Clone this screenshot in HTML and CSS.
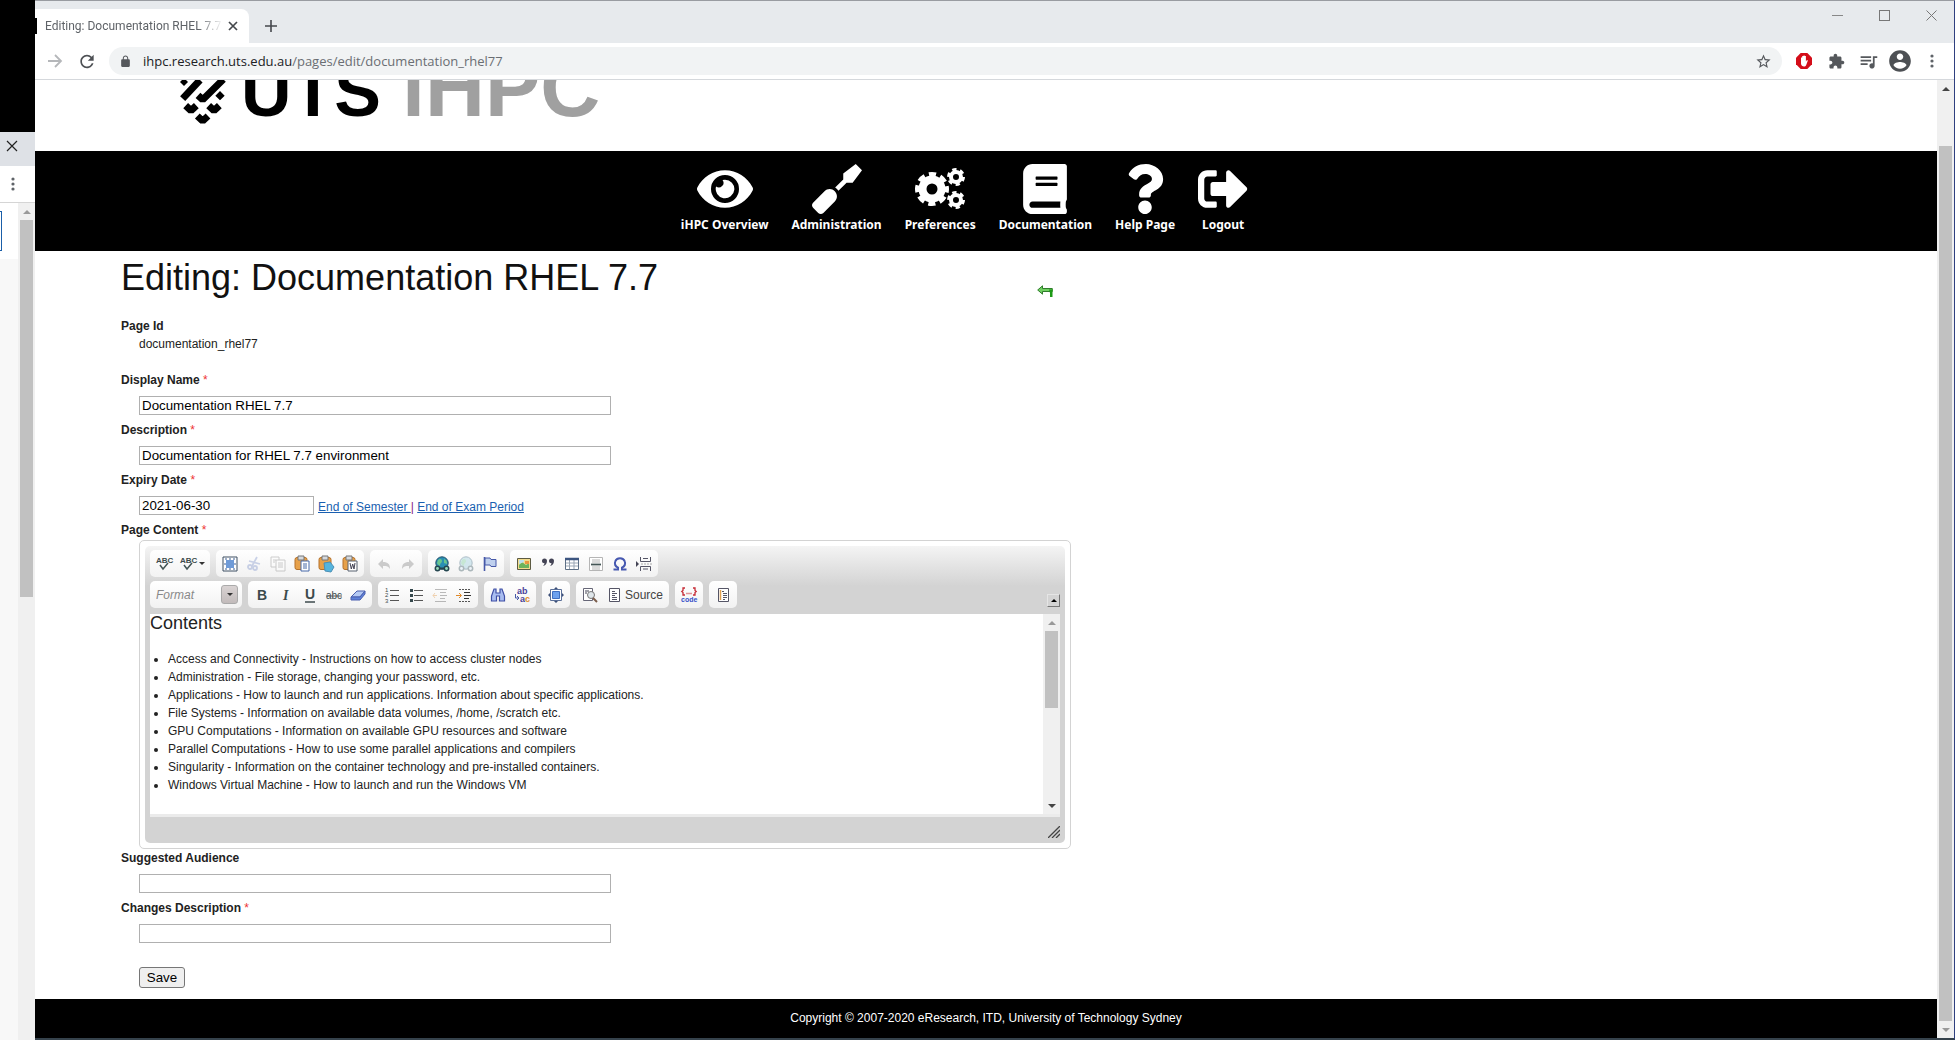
FILE: index.html
```html
<!DOCTYPE html>
<html lang="en">
<head>
<meta charset="utf-8">
<title>Editing: Documentation RHEL 7.7</title>
<link rel="stylesheet" href="styles.css">
</head>
<body>
<aside class="behind">
  <div class="behind-desktop"></div>
  <div class="behind-title"><button class="plain" aria-label="Close background window"><svg width="12" height="12" viewBox="0 0 12 12"><path d="M1 1l10 10M11 1L1 11" stroke="#222" stroke-width="1.2"/></svg></button></div>
  <div class="behind-tools"><button class="plain" aria-label="Background window menu"><svg width="4" height="14" viewBox="0 0 4 14" fill="#5f6368"><circle cx="2" cy="2" r="1.6"/><circle cx="2" cy="7" r="1.6"/><circle cx="2" cy="12" r="1.6"/></svg></button></div>
  <div class="behind-page">
    <div class="behind-content"><div class="behind-top"><div class="behind-field"></div></div></div>
    <div class="scroll"><span class="arrow up dim"></span><span class="thumb behind-thumb"></span></div>
  </div>
</aside>

<div class="window">
  <header class="titlebar">
    <div class="tab">
      <span class="tab-title">Editing: Documentation RHEL 7.7</span>
      <button class="plain" aria-label="Close tab"><svg width="10" height="10" viewBox="0 0 10 10"><path d="M1 1l8 8M9 1L1 9" stroke="#45484c" stroke-width="1.7"/></svg></button>
    </div>
    <button class="plain new-tab" aria-label="New tab"><svg width="12" height="12" viewBox="0 0 12 12"><path d="M6 0v12M0 6h12" stroke="#45484c" stroke-width="1.6"/></svg></button>
    <div class="controls">
      <button class="plain" aria-label="Minimize"><svg width="11" height="11" viewBox="0 0 11 11"><path d="M0 5.5h11" stroke="#888"/></svg></button>
      <button class="plain" aria-label="Maximize"><svg width="11" height="11" viewBox="0 0 11 11"><rect x=".5" y=".5" width="10" height="10" fill="none" stroke="#777"/></svg></button>
      <button class="plain" aria-label="Close"><svg width="11" height="11" viewBox="0 0 11 11"><path d="M.5.5l10 10M10.500.5l-10 10" stroke="#777"/></svg></button>
    </div>
  </header>

  <div class="toolbar">
    <button class="plain tool" aria-label="Forward"><svg width="16" height="16" viewBox="0 0 16 16" fill="none" stroke="#b5b7ba" stroke-width="1.8"><path d="M1 8h13M8 2l6 6-6 6"/></svg></button>
    <button class="plain tool" aria-label="Reload"><svg width="21" height="21" viewBox="0 0 24 24" fill="#4d5054"><path d="M17.65 6.35C16.2 4.900 14.210 4 12 4c-4.420 0-7.990 3.580-7.990 8s3.570 8 7.990 8c3.730 0 6.840-2.550 7.730-6h-2.080c-.82 2.330-3.040 4-5.650 4-3.310 0-6-2.690-6-6s2.690-6 6-6c1.660 0 3.140.690 4.220 1.780L13 11h7V4l-2.350 2.350z"/></svg></button>
    <div class="omnibox">
      <svg width="13" height="13" viewBox="0 0 24 24" fill="#55585c"><path d="M18 8h-1V6c0-2.760-2.240-5-5-5S7 3.240 7 6v2H6c-1.100 0-2 .9-2 2v10c0 1.100.9 2 2 2h12c1.100 0 2-.9 2-2V10c0-1.100-.9-2-2-2zm-2.900 0H8.900V6c0-1.710 1.390-3.100 3.100-3.100 1.710 0 3.100 1.390 3.100 3.100v2z"/></svg>
      <span class="url"><b>ihpc.research.uts.edu.au</b>/pages/edit/documentation_rhel77</span>
      <button class="plain" aria-label="Bookmark"><svg width="17" height="17" viewBox="0 0 24 24" fill="#55585c"><path d="M22 9.240l-7.190-.62L12 2 9.190 8.630 2 9.240l5.460 4.730L5.820 21 12 17.270 18.180 21l-1.630-7.030L22 9.240zM12 15.400l-3.760 2.270 1-4.280-3.320-2.880 4.380-.38L12 6.100l1.710 4.040 4.380.38-3.320 2.880 1 4.280L12 15.400z"/></svg></button>
    </div>
    <div class="extensions">
      <button class="plain" aria-label="Ad blocker"><svg width="16" height="16" viewBox="0 0 16 16"><path d="M4.700 0h6.600L16 4.700v6.600L11.300 16H4.700L0 11.300V4.700z" fill="#d40d19"/><path d="M5 8V4.500h1.200V3h1.300v-.6h1.200V3h1.200v5.500l1-1.500 1 .5-1.700 4.500c-.5 1-1.200 1.500-2.200 1.500-1.500 0-3-1-3-3z" fill="#fff"/></svg></button>
      <button class="plain" aria-label="Extensions"><svg width="17" height="17" viewBox="0 0 24 24" fill="#55585c"><path d="M20.500 11H19V7c0-1.100-.9-2-2-2h-4V3.500C13 2.120 11.880 1 10.500 1S8 2.120 8 3.500V5H4c-1.100 0-1.990.9-1.990 2v3.800H3.500c1.490 0 2.700 1.210 2.700 2.700s-1.210 2.700-2.700 2.700H2V20c0 1.100.9 2 2 2h3.800v-1.500c0-1.490 1.210-2.700 2.700-2.700 1.490 0 2.700 1.210 2.700 2.700V22H17c1.100 0 2-.9 2-2v-4h1.500c1.380 0 2.500-1.120 2.500-2.500S21.880 11 20.500 11z"/></svg></button>
      <button class="plain" aria-label="Media"><svg width="21" height="21" viewBox="0 0 24 24" fill="#55585c"><path d="M15 6H3v2h12V6zm0 4H3v2h12v-2zM3 16h8v-2H3v2zM17 6v8.180c-.31-.11-.65-.18-1-.18-1.660 0-3 1.340-3 3s1.340 3 3 3 3-1.340 3-3V8h3V6h-5z"/></svg></button>
      <button class="plain" aria-label="Profile"><svg width="26" height="26" viewBox="0 0 24 24" fill="#4d5054"><path d="M12 2C6.480 2 2 6.480 2 12s4.480 10 10 10 10-4.480 10-10S17.520 2 12 2zm0 3c1.660 0 3 1.340 3 3s-1.340 3-3 3-3-1.340-3-3 1.340-3 3-3zm0 14.200c-2.500 0-4.710-1.280-6-3.220.03-1.990 4-3.080 6-3.080 1.990 0 5.970 1.090 6 3.080-1.290 1.940-3.500 3.220-6 3.220z"/></svg></button>
      <button class="plain" aria-label="Menu"><svg width="4" height="14" viewBox="0 0 4 14" fill="#5f6368"><circle cx="2" cy="2" r="1.6"/><circle cx="2" cy="7" r="1.6"/><circle cx="2" cy="12" r="1.6"/></svg></button>
    </div>
  </div>

  <div class="viewport">
    <div class="page">
      <div class="banner">
        <svg class="emblem" width="46" height="46" viewBox="0 0 138 138" fill="none" stroke="#000" stroke-width="21"><path d="M8 56L60 0M54 46l14 13L130 -2M17 77l16 15 16-15M86 77l16 15 16-15M52 108l16 15 16-15" stroke-linejoin="bevel"/><path d="M0 6l12-12 12 12-12 12zM106 47l14-14 14 14-14 14z" fill="#000" stroke="none"/></svg>
        <span class="logo"><span class="logo-uts">UTS</span><span class="logo-ihpc">iHPC</span></span>
      </div>

      <nav class="nav">
        <a href="#"><svg width="56" height="50" viewBox="0 0 576 512"><path d="M572.52 241.400C518.290 135.590 410.930 64 288 64S57.680 135.640 3.480 241.410a32.350 32.350 0 0 0 0 29.190C57.710 376.410 165.070 448 288 448s230.320-71.640 284.520-177.410a32.350 32.350 0 0 0 0-29.190zM288 400a144 144 0 1 1 144-144 143.930 143.930 0 0 1-144 144zm0-240a95.310 95.310 0 0 0-25.310 3.790 47.850 47.850 0 0 1-66.900 66.900A95.780 95.780 0 1 0 288 160z"/></svg><span>iHPC Overview</span></a>
        <a href="#"><svg width="50" height="50" viewBox="0 0 512 512"><path d="M448 0L320 96v62.060l-83.030 83.030c6.790 4.250 13.270 9.060 19.070 14.870 5.800 5.800 10.620 12.280 14.870 19.070L353.940 192H416l96-128-64-64zM128 278.590L10.920 395.670c-14.550 14.550-14.550 38.150 0 52.710l52.700 52.700c14.560 14.560 38.150 14.560 52.710 0L233.410 384c29.110-29.110 29.110-76.300 0-105.410s-76.300-29.110-105.410 0z"/></svg><span>Administration</span></a>
        <a href="#"><svg width="50" height="50" viewBox="0 0 50 50" class="gears"><circle cx="17" cy="25" r="9.500" stroke-width="8"/><circle cx="17" cy="25" r="14.500" stroke-width="5" stroke-dasharray="7 4.390" stroke-dashoffset="3.500"/><circle cx="41" cy="13" r="5" stroke-width="4"/><circle cx="41" cy="13" r="7.500" stroke-width="3" stroke-dasharray="4.200 3.650"/><circle cx="41" cy="36" r="5" stroke-width="4"/><circle cx="41" cy="36" r="7.500" stroke-width="3" stroke-dasharray="4.200 3.650"/></svg><span>Preferences</span></a>
        <a href="#"><svg width="44" height="50" viewBox="0 0 448 512"><path d="M448 360V24c0-13.300-10.700-24-24-24H96C43 0 0 43 0 96v320c0 53 43 96 96 96h328c13.300 0 24-10.700 24-24v-16c0-7.500-3.500-14.300-8.900-18.700-4.200-15.400-4.200-59.300 0-74.700 5.400-4.300 8.900-11.100 8.900-18.600zM128 134c0-3.300 2.700-6 6-6h212c3.300 0 6 2.700 6 6v20c0 3.300-2.700 6-6 6H134c-3.300 0-6-2.700-6-6v-20zm0 64c0-3.300 2.700-6 6-6h212c3.300 0 6 2.700 6 6v20c0 3.300-2.700 6-6 6H134c-3.300 0-6-2.700-6-6v-20zm253.400 250H96c-17.700 0-32-14.300-32-32 0-17.600 14.400-32 32-32h285.400c-1.900 17.100-1.900 46.900 0 64z"/></svg><span>Documentation</span></a>
        <a href="#"><svg width="38" height="50" viewBox="0 0 384 512"><path d="M202.021 0C122.202 0 70.503 32.703 29.914 91.026c-7.363 10.580-5.093 25.086 5.178 32.874l43.138 32.709c10.373 7.865 25.132 6.026 33.253-4.148 25.049-31.381 43.630-49.449 82.757-49.449 30.764 0 68.816 19.799 68.816 49.631 0 22.552-18.617 34.134-48.993 51.164-35.423 19.860-82.299 44.576-82.299 106.405V320c0 13.255 10.745 24 24 24h72.471c13.255 0 24-10.745 24-24v-5.773c0-42.860 125.268-44.645 125.268-160.627C377.504 66.256 286.902 0 202.021 0zM192 373.459c-38.196 0-69.271 31.075-69.271 69.271 0 38.195 31.075 69.270 69.271 69.270s69.271-31.075 69.271-69.271-31.075-69.270-69.271-69.270z"/></svg><span>Help Page</span></a>
        <a href="#"><svg width="50" height="50" viewBox="0 0 512 512"><path d="M497 273L329 441c-15 15-41 4.500-41-17v-96H152c-13.300 0-24-10.700-24-24v-96c0-13.300 10.700-24 24-24h136V88c0-21.400 25.900-32 41-17l168 168c9.300 9.400 9.300 24.600 0 34zM192 436v-40c0-6.600-5.400-12-12-12H96c-17.700 0-32-14.300-32-32V160c0-17.700 14.300-32 32-32h84c6.600 0 12-5.400 12-12V76c0-6.600-5.400-12-12-12H96c-53 0-96 43-96 96v192c0 53 43 96 96 96h84c6.600 0 12-5.400 12-12z"/></svg><span>Logout</span></a>
      </nav>

      <form class="form">
        <div class="heading">
          <h1>Editing: Documentation RHEL 7.7</h1>
          <a class="back" href="#" aria-label="Back"><svg width="16" height="12" viewBox="0 0 16 12"><path d="M.7 5L5.500.8v2.700h9.800v3H5.500v2.700z" fill="#6fce60" stroke="#2f7d2b"/><path d="M12 4.500h3.500V12H13V8z" fill="#1d9a16"/></svg></a>
        </div>
        <div class="field static"><span class="label">Page Id</span><span class="value">documentation_rhel77</span></div>
        <div class="field"><label for="name">Display Name <i>*</i></label><input id="name" type="text" value="Documentation RHEL 7.7"></div>
        <div class="field"><label for="desc">Description <i>*</i></label><input id="desc" type="text" value="Documentation for RHEL 7.7 environment"></div>
        <div class="field"><label for="expiry">Expiry Date <i>*</i></label><div class="date-row"><input id="expiry" class="short" type="text" value="2021-06-30"><span class="links"><a href="#">End of Semester </a><em>|</em> <a href="#">End of Exam Period</a></span></div></div>
        <div class="field content-field">
          <span class="label" id="content-label">Page Content <i>*</i></span>
          <div class="editor">
            <div class="editor-inner">
              <div class="tools">
                <div class="group">
                  <button type="button" aria-label="Check spelling"><svg viewBox="0 0 16 16"><text x="0" y="7" class="tiny">ABC</text><path d="M4 9l3 4 5-6" fill="none" stroke="#455" stroke-width="1.500"/></svg></button>
                  <button type="button" class="wide" aria-label="Spell check as you type"><svg viewBox="0 0 16 16"><text x="0" y="7" class="tiny">ABC</text><path d="M4 9l3 4 5-6" fill="none" stroke="#455" stroke-width="1.500"/></svg><span class="caret"></span></button>
                </div>
                <div class="group">
                  <button type="button" aria-label="Select all"><svg viewBox="0 0 16 16"><path d="M1 1h14v14H1z" fill="#fff" stroke="#3d4f63"/><path d="M4 4h8v8H4z" fill="#6f9bd8"/><path d="M3 3h2M7 3h2M11 3h2M3 13h2M7 13h2M11 13h2M3 7v2M13 7v2" stroke="#3c5f93"/></svg></button>
                  <button type="button" class="off" aria-label="Cut"><svg viewBox="0 0 16 16" fill="none" stroke="#6f86c4" stroke-width="1.800"><path d="M11 1L6 10M3 5l11 3"/><circle cx="4" cy="11" r="2"/><circle cx="9" cy="12" r="2"/></svg></button>
                  <button type="button" class="off" aria-label="Copy"><svg viewBox="0 0 16 16" fill="#fff" stroke="#777"><path d="M1 1h8v10H1z"/><path d="M6 4h9v11H6zM8 7h5M8 9h5M8 11h5M3 4h3M3 6h2"/></svg></button>
                  <button type="button" aria-label="Paste"><svg viewBox="0 0 16 16"><rect x="1" y="1.500" width="12" height="12" rx="2" fill="#e7a14a" stroke="#b5712a"/><path d="M4 0h6v4H4z" fill="#d5d9de" stroke="#777"/><path d="M7 5h8v10H7z" fill="#fff" stroke="#4668a8"/><path d="M9 8h4M9 10h4M9 12h4" stroke="#4668a8"/></svg></button>
                  <button type="button" aria-label="Paste as text"><svg viewBox="0 0 16 16"><rect x="1" y="1.500" width="12" height="12" rx="2" fill="#e7a14a" stroke="#b5712a"/><path d="M4 0h6v4H4z" fill="#d5d9de" stroke="#777"/><path d="M6 7l6-1 4 5-3 5-6-1z" fill="#55b4dd" stroke="#4b8fb5"/></svg></button>
                  <button type="button" aria-label="Paste from Word"><svg viewBox="0 0 16 16"><rect x="1" y="1.500" width="12" height="12" rx="2" fill="#e7a14a" stroke="#b5712a"/><path d="M4 0h6v4H4z" fill="#d5d9de" stroke="#777"/><path d="M6 5h9v10H6z" fill="#fff" stroke="#596270"/><path d="M8 7l1.300 6 1.400-5 1.300 5L13 7" fill="none" stroke="#445"/></svg></button>
                </div>
                <div class="group">
                  <button type="button" class="off" aria-label="Undo"><svg viewBox="0 0 16 16" fill="#777"><path d="M2 8l5-5v3c5 0 7 2 7 7-1.500-2.500-3-3-7-3v3z"/></svg></button>
                  <button type="button" class="off" aria-label="Redo"><svg viewBox="0 0 16 16" fill="#777"><path d="M14 8L9 3v3c-5 0-7 2-7 7 1.500-2.500 3-3 7-3v3z"/></svg></button>
                </div>
                <div class="group">
                  <button type="button" aria-label="Link"><svg viewBox="0 0 16 16"><circle cx="8" cy="7" r="6.200" fill="#2a8fb3" stroke="#24506a"/><path d="M4 4c2-2 4-1 4 1S6 7 6 9 3 8 3 7zM10 3c3 1 3 3 3 5l-3-1z" fill="#69c58e"/><path d="M5 12.500h6" stroke="#24454f" stroke-width="2"/><circle cx="3.500" cy="12.500" r="2.200" fill="#9db" stroke="#24454f" stroke-width="1.500"/><circle cx="12.500" cy="12.500" r="2.200" fill="#9db" stroke="#24454f" stroke-width="1.500"/></svg></button>
                  <button type="button" class="off" aria-label="Unlink"><svg viewBox="0 0 16 16"><circle cx="8" cy="7" r="6.200" fill="#8cc5d8" stroke="#24506a"/><path d="M4 4c2-2 4-1 4 1S6 7 6 9 3 8 3 7z" fill="#69c58e"/><circle cx="3.500" cy="12.500" r="2.200" fill="#def" stroke="#24454f" stroke-width="1.500"/><circle cx="12.500" cy="12.500" r="2.200" fill="#def" stroke="#24454f" stroke-width="1.500"/></svg></button>
                  <button type="button" aria-label="Anchor"><svg viewBox="0 0 16 16"><path d="M2.500 1v14" stroke="#4658a8" stroke-width="1.600"/><path d="M3 2h5l1 1.500h5v7H9L8 9H3z" fill="#bfd0ee" stroke="#4658a8"/></svg></button>
                </div>
                <div class="group">
                  <button type="button" aria-label="Image"><svg viewBox="0 0 16 16"><path d="M1.500 2.500h13v11h-13z" fill="#f2dc8c" stroke="#5d5a42"/><path d="M3 9l3-3 4 3 3-2v5H3z" fill="#6cb35c"/><path d="M3 4h5v2L3 8z" fill="#bfe0ee"/><path d="M9 5h4v3H9z" fill="#e9953f"/></svg></button>
                  <button type="button" aria-label="Block quote"><svg viewBox="0 0 16 16" fill="#445"><path d="M2 5a2.500 2.500 0 1 1 5 0c0 3-2 4.500-4 5 1-1 1.500-2 1.500-2.700C3 7.300 2 6.300 2 5zM9 5a2.500 2.500 0 1 1 5 0c0 3-2 4.500-4 5 1-1 1.500-2 1.500-2.700C10 7.300 9 6.300 9 5z"/></svg></button>
                  <button type="button" aria-label="Table"><svg viewBox="0 0 16 16" fill="#fff" stroke="#5d6f85"><path d="M1.500 2.500h13v11h-13z"/><path d="M5.500 4v9M10 4v9M2 7h12M2 10h12" stroke="#9aa6b4"/><path d="M1 3h14" stroke="#3c5580" stroke-width="2.500"/></svg></button>
                  <button type="button" aria-label="Horizontal line"><svg viewBox="0 0 16 16" fill="#fff" stroke="#b5b5b5"><path d="M1.500 1.500h13v13h-13zM4 4h8M4 6h8M4 11h8M4 13h8"/><path d="M3 8.500h10" stroke="#455" stroke-width="1.800"/></svg></button>
                  <button type="button" aria-label="Special character"><svg viewBox="0 0 16 16" fill="none" stroke="#4658b0" stroke-width="2"><path d="M1.500 13.500H6v-1.800C3 10 2.500 7.500 3.200 5.500 4 3 6 2.200 8 2.200s4 .8 4.800 3.300c.7 2 .2 4.500-2.800 6.200v1.800h4.500"/></svg></button>
                  <button type="button" aria-label="Page break"><svg viewBox="0 0 16 16" fill="none" stroke="#556"><path d="M4.500 1v4.500h10V1M7 2.500h5M4.500 15v-4.500h10V15M7 13h5"/><path d="M0 5l3 3-3 3z" fill="#445" stroke="none"/><path d="M5 8h11" stroke-dasharray="2 1" stroke="#aaa"/></svg></button>
                </div>
              </div>
              <div class="tools second">
                <div class="group combo"><select aria-label="Format"><option>Format</option></select><span class="combo-open"></span></div>
                <div class="group">
                  <button type="button" aria-label="Bold"><svg viewBox="0 0 16 16"><text x="3" y="13" class="letter">B</text></svg></button>
                  <button type="button" aria-label="Italic"><svg viewBox="0 0 16 16"><text x="5" y="13" class="letter serif">I</text></svg></button>
                  <button type="button" aria-label="Underline"><svg viewBox="0 0 16 16"><text x="3" y="12" class="letter">U</text><path d="M3 15h10" stroke="#3c4a4c" stroke-width="1.500"/></svg></button>
                  <button type="button" aria-label="Strike through"><svg viewBox="0 0 16 16"><text x="0" y="12" class="strike">abc</text><path d="M0 9h16" stroke="#555"/></svg></button>
                  <button type="button" aria-label="Remove format"><svg viewBox="0 0 16 16"><path d="M1 10l6-6h8l-5 6z" fill="#b4c9f3" stroke="#4a5fae"/><path d="M1 10h9l5-6v3l-5 6H1z" fill="#5f82da" stroke="#4a5fae"/></svg></button>
                </div>
                <div class="group">
                  <button type="button" aria-label="Numbered list"><svg viewBox="0 0 16 16"><path d="M6 3.500h9M6 8.500h9M6 13.500h9" stroke="#555"/><text x="1" y="5" class="digit">1</text><text x="1" y="10" class="digit">2</text><text x="1" y="16" class="digit">3</text></svg></button>
                  <button type="button" aria-label="Bulleted list"><svg viewBox="0 0 16 16"><path d="M6 3.500h9M6 8.500h9M6 13.500h9" stroke="#555"/><path d="M2 2h3v3H2zM2 7h3v3H2zM2 12h3v3H2z" fill="#34474c"/></svg></button>
                  <button type="button" class="off" aria-label="Decrease indent"><svg viewBox="0 0 16 16"><path d="M3 2.500h12M8 5.500h6M8 8.500h7M8 11.500h5M3 14.500h11" stroke="#444"/><path d="M5 8.500H1M3 6L1 8.500 3 11" fill="none" stroke="#e08a2a"/></svg></button>
                  <button type="button" aria-label="Increase indent"><svg viewBox="0 0 16 16"><path d="M8 5.500h6M8 8.500h7M8 11.500h5" stroke="#333"/><path d="M3 2.500h12M3 14.500h11" stroke="#555" stroke-dasharray="2 1"/><path d="M0 8.500h5M3 6l2.500 2.500L3 11" fill="none" stroke="#e08a2a"/></svg></button>
                </div>
                <div class="group">
                  <button type="button" aria-label="Find"><svg viewBox="0 0 16 16" fill="#a9bdf0" stroke="#3f4fa5" stroke-width="1.200"><path d="M4 2h2v4h4V2h2l2.500 7v5h-5V9h-3v5h-5V9z"/></svg></button>
                  <button type="button" aria-label="Replace"><svg viewBox="0 0 16 16"><text x="3" y="7" class="swap">ab</text><text x="6" y="15" class="swap">a<tspan fill="#e08a2a">c</tspan></text><path d="M1.500 7v4h3M3 9l2 2-2 2" fill="none" stroke="#4658a8"/></svg></button>
                </div>
                <div class="group"><button type="button" aria-label="Maximize"><svg viewBox="0 0 16 16"><path d="M8 0l2.500 2.500h-5zM8 16l2.500-2.500h-5zM0 8l2.500-2.500v5zM16 8l-2.500-2.500v5z" fill="#3c4f78"/><path d="M2.500 2.500h11v11h-11z" fill="#fff" stroke="#5a6f98"/><path d="M4.500 4.500h7v7h-7z" fill="#6da1ee" stroke="#3f6fc0"/></svg></button></div>
                <div class="group">
                  <button type="button" aria-label="Preview"><svg viewBox="0 0 16 16"><path d="M1.500 1.500h9v12h-9z" fill="#fff" stroke="#667"/><path d="M3 4h4M3 6h2" stroke="#445"/><circle cx="9" cy="8" r="3.500" fill="#dfe6ea" stroke="#777"/><path d="M11 11l4 4" stroke="#7a5c4a" stroke-width="2"/></svg></button>
                  <button type="button" class="source"><svg viewBox="0 0 16 16"><path d="M3.500 1.500h10v13h-10z" fill="#fff" stroke="#556"/><path d="M6 4.500h3M6 6.500h5M6 8.500h3M6 10.500h5M6 12.500h5" stroke="#556"/></svg>Source</button>
                </div>
                <div class="group"><button type="button" aria-label="Code snippet"><svg viewBox="0 0 16 16"><path d="M4 1H2v2.500L.8 4.500 2 5.500V8h2M12 1h2v2.500l1.200 1L14 5.500V8h-2M5.500 6.500h1M7.500 6.500h1M9.500 6.500h1" fill="none" stroke="#c62a35" stroke-width="1.300"/><text x="0" y="15" class="code">code</text></svg></button></div>
                <div class="group"><button type="button" aria-label="Templates"><svg viewBox="0 0 16 16"><path d="M3.500 1.500h10v13h-10z" fill="#fff" stroke="#556"/><path d="M5.500 3v10" stroke="#e0a050" stroke-width="1.500"/><path d="M7 4.500h2M8 6.500h4M8 8.500h4M8 10.500h4M8 12.500h2" stroke="#556"/></svg></button></div>
                <button type="button" class="collapse" aria-label="Collapse toolbar"><span></span></button>
              </div>
              <div class="edit-area">
                <div class="document" contenteditable="true" role="textbox" aria-labelledby="content-label">
                  <h2>Contents</h2>
                  <ul>
                    <li>Access and Connectivity - Instructions on how to access cluster nodes</li>
                    <li>Administration - File storage, changing your password, etc.</li>
                    <li>Applications - How to launch and run applications. Information about specific applications.</li>
                    <li>File Systems - Information on available data volumes, /home, /scratch etc.</li>
                    <li>GPU Computations - Information on available GPU resources and software</li>
                    <li>Parallel Computations - How to use some parallel applications and compilers</li>
                    <li>Singularity - Information on the container technology and pre-installed containers.</li>
                    <li>Windows Virtual Machine - How to launch and run the Windows VM</li>
                  </ul>
                </div>
                <div class="scroll"><span class="arrow up dim"></span><span class="thumb edit-thumb"></span><span class="arrow down"></span></div>
              </div>
              <div class="resize"><svg width="12" height="12" viewBox="0 0 12 12" stroke="#444"><path d="M0 12L12 0M4 12l8-8M8 12l4-4" stroke-width="1.300"/></svg></div>
            </div>
          </div>
        </div>
        <div class="field"><label for="audience">Suggested Audience</label><input id="audience" type="text"></div>
        <div class="field"><label for="changes">Changes Description <i>*</i></label><input id="changes" type="text"></div>
        <button type="submit" class="save">Save</button>
      </form>
      <footer class="footer">Copyright © 2007-2020 eResearch, ITD, University of Technology Sydney</footer>
    </div>
    <div class="scroll page-scroll"><span class="arrow up"></span><span class="thumb page-thumb"></span><span class="arrow down dim"></span></div>
  </div>
</div>
</body>
</html>
```
FILE: styles.css
```css
* { box-sizing: border-box; }

body {
  margin: 0;
  min-height: 100vh;
  display: flex;
  background: #000;
  color: #222;
  font: 12px/18px "Liberation Sans", Arial, sans-serif;
}

svg { display: block; }

.plain {
  display: flex;
  padding: 0;
  border: 0;
  background: none;
}

/* Scroll bars */
.scroll {
  width: 17px;
  flex: none;
  display: flex;
  flex-direction: column;
  align-items: center;
  background: #f0f0f0;
}
.arrow {
  width: 17px;
  height: 17px;
  flex: none;
  display: grid;
  place-items: center;
}
.arrow::before {
  content: "";
  border: 4px solid transparent;
}
.arrow.up::before { border-top: 0; border-bottom-color: #444; }
.arrow.down::before { border-bottom: 0; border-top-color: #444; }
.arrow.up.dim::before { border-bottom-color: #999; }
.arrow.down.dim::before { border-top-color: #999; }
.thumb { width: 13px; background: #c1c1c1; }
.scroll .arrow.down { margin-top: auto; }

/* Window behind */
.behind {
  width: 35px;
  flex: none;
  display: flex;
  flex-direction: column;
}
.behind-desktop { height: 132px; background: #000; }
.behind-title {
  height: 34px;
  padding: 8px 6px;
  background: #dee1e6;
}
.behind-tools {
  height: 37px;
  padding: 11px;
  background: #fff;
  border-bottom: 1px solid #d5d5d5;
}
.behind-page { flex: 1; display: flex; }
.behind-content { flex: 1; background: #f8f8f8; }
.behind-top { height: 56px; padding-top: 8px; background: #fff; }
.behind-field {
  width: 2px;
  height: 40px;
  border: solid #1a5ea8;
  border-width: 1px 1px 1px 0;
}
.behind-thumb { height: 377px; }

/* Browser window */
.window {
  flex: 1;
  min-width: 0;
  display: flex;
  flex-direction: column;
  border: solid #999ca1;
  border-width: 1px 1px 2px 0;
  border-right-color: #2f3f7f;
  border-bottom-color: #35424c;
  background: #fff;
}
.titlebar {
  height: 42px;
  display: flex;
  align-items: flex-end;
  background: #e7eaed;
  font-family: Roboto, "Open Sans", sans-serif;
}
.tab {
  position: relative;
  width: 214px;
  height: 34px;
  padding: 0 11px 0 10px;
  display: flex;
  align-items: center;
  justify-content: space-between;
  background: #fff;
  border-radius: 0 8px 0 0;
}
.tab::before {
  content: "";
  position: absolute;
  left: 0;
  top: 9px;
  width: 2px;
  height: 16px;
  background: #000;
}
.tab-title {
  width: 178px;
  overflow: hidden;
  white-space: nowrap;
  color: #5f6368;
  mask-image: linear-gradient(90deg, #000 86%, transparent);
}
.new-tab { margin: 0 0 11px 16px; }
.controls {
  margin-left: auto;
  align-self: flex-start;
  display: flex;
  gap: 36px;
  padding: 9px 17px 0 0;
}

.toolbar {
  height: 37px;
  display: flex;
  align-items: center;
  gap: 6px;
  padding: 0 6px 0 10px;
  border-bottom: 1px solid #d5d8dc;
}
.tool { width: 20px; margin-right: 6px; justify-content: center; }
.omnibox {
  flex: 1;
  height: 28px;
  display: flex;
  align-items: center;
  gap: 11px;
  padding: 0 10px;
  border-radius: 14px;
  background: #f1f3f4;
  color: #6a6e73;
  font: 13px/18px "Open Sans", "Noto Sans", sans-serif;
}
.url { flex: 1; }
.url b { font-weight: 400; color: #202124; }
.extensions {
  display: flex;
  align-items: center;
}
.extensions .plain { width: 32px; justify-content: center; }

/* Page */
.viewport { flex: 1; display: flex; }
.page {
  flex: 1;
  min-width: 0;
  display: flex;
  flex-direction: column;
}
.banner {
  height: 71px;
  padding: 0 0 0 145px;
  display: flex;
  overflow: hidden;
}
.emblem { margin-right: 15px; flex: none; }
.logo {
  height: 48px;
  display: flex;
  align-items: baseline;
  align-self: flex-start;
  font-weight: 700;
  line-height: 16px;
}
.logo-uts { width: 161px; font-size: 70px; color: #000; }
.logo-ihpc { font-size: 83px; color: #a0a0a0; }

.nav {
  height: 100px;
  padding: 13px 43px 0 0;
  display: flex;
  justify-content: center;
  gap: 23px;
  background: #000;
}
.nav a {
  display: flex;
  flex-direction: column;
  align-items: center;
  gap: 2px;
  color: #fff;
  font: 700 12px/18px "Noto Sans", "Open Sans", sans-serif;
  text-decoration: none;
}
.nav svg { fill: #fff; }
.nav .gears { fill: none; stroke: #fff; }

.form {
  flex: 1;
  padding: 6px 86px 10px;
}
.heading {
  max-width: 932px;
  display: flex;
  align-items: flex-end;
  justify-content: space-between;
  margin-bottom: 18px;
}
h1 {
  margin: 0;
  color: #111;
  font-size: 36px;
  font-weight: 400;
  line-height: 42px;
}
.back { margin-bottom: 2px; }
.field {
  display: flex;
  flex-direction: column;
  margin-bottom: 6px;
}
.field label, .label { font-weight: 700; margin-bottom: 7px; }
.field i { font-weight: 400; font-style: normal; color: #e33; }
.static { margin-bottom: 18px; }
.static .label { margin-bottom: 0; }
.value { margin-left: 18px; }
input {
  width: 472px;
  max-width: 100%;
  height: 19px;
  margin: 0 0 0 18px;
  padding: 1px 2px;
  border: 1px solid #b0b0b0;
  background: #fff;
  color: #000;
  font-family: "Liberation Sans", Arial, sans-serif;
}
.short { width: 175px; }
.date-row { display: flex; gap: 4px; }
.links { height: 19px; padding-top: 2px; white-space: pre; }
.links a { color: #1a5fb0; }
.links em { font-style: normal; color: #828; }

/* Rich text editor */
.content-field { margin-bottom: 0; }
.content-field .label { margin-bottom: 1px; }
.editor {
  max-width: 932px;
  margin-left: 18px;
  padding: 5px;
  border: 1px solid #d3d3d3;
  border-radius: 5px;
}
.editor-inner {
  padding: 4px 5px 5px;
  border-radius: 5px;
  background: linear-gradient(#f4f4f4, #d3d3d3 40px);
}
.tools {
  display: flex;
  flex-wrap: wrap;
  gap: 6px;
  margin-bottom: 4px;
}
.second { margin-bottom: 6px; }
.group {
  height: 27px;
  display: flex;
  padding: 1px 2px;
  border-radius: 5px;
  background: linear-gradient(#fff, #f2f2f2);
}
.group button {
  width: 24px;
  height: 25px;
  padding: 4px;
  display: flex;
  align-items: center;
  border: 0;
  background: none;
}
.group svg { width: 16px; height: 16px; flex: none; overflow: visible; }
.group .wide { width: 32px; gap: 3px; }
.group .off { opacity: 0.35; }
.caret, .combo-open::before {
  border: 3px solid transparent;
  border-top-color: #333;
  border-bottom: 0;
}
.group .source {
  width: 65px;
  gap: 3px;
  color: #444;
  font: 12px/18px "Liberation Sans", Arial, sans-serif;
}
.combo { position: relative; width: 92px; padding: 0; }
.combo select {
  width: 92px;
  padding: 0 6px;
  border: 0;
  appearance: none;
  background: none;
  color: #888;
  font: italic 12px/24px "Liberation Sans", Arial, sans-serif;
}
.combo-open {
  position: absolute;
  right: 4px;
  top: 4px;
  width: 17px;
  height: 19px;
  display: grid;
  place-items: center;
  border: 1px solid #aaa;
  border-radius: 3px;
  background: linear-gradient(#d9d3d3, #c2bbbb);
  pointer-events: none;
}
.combo-open::before { content: ""; }
.collapse {
  width: 13px;
  height: 13px;
  margin: 13px 0 0 auto;
  padding: 0;
  display: grid;
  place-items: center;
  border: 1px solid #777;
  border-top-color: #e5e5e5;
  border-left-color: #e5e5e5;
  background: #d3d3d3;
}
.collapse span { border: 3px solid transparent; border-top: 0; border-bottom-color: #000; }
.tiny, .digit, .swap, .code, .letter, .strike { font-family: "Liberation Sans", Arial, sans-serif; fill: #3c4a4c; }
.tiny { font-size: 8px; font-weight: 700; }
.digit { font-size: 6px; }
.swap { font-size: 9px; fill: #4a3f9a; font-weight: 700; }
.code { font-size: 7px; fill: #3550c8; font-weight: 700; }
.letter { font-size: 14px; font-weight: 700; }
.letter.serif { font-family: "Liberation Serif", serif; font-style: italic; }
.strike { font-size: 10px; }

.edit-area {
  display: flex;
  min-height: 203px;
  border-bottom: 3px solid #ebebeb;
}
.document {
  flex: 1;
  background: #fff;
  outline: 0;
}
.document h2 {
  margin: 0 0 18px;
  color: #222;
  font-size: 18px;
  font-weight: 400;
  line-height: 18px;
}
.document ul { margin: 0; padding-left: 18px; }
.edit-thumb { height: 77px; }
.resize {
  display: flex;
  justify-content: flex-end;
  padding-top: 9px;
}

.save {
  width: 46px;
  height: 21px;
  margin: 24px 0 0 18px;
  padding: 0;
  display: block;
  border: 1px solid #767676;
  border-radius: 3px;
  background: #efefef;
  color: #000;
  font-family: "Liberation Sans", Arial, sans-serif;
}
.footer {
  height: 39px;
  padding-top: 10px;
  background: #000;
  color: #fff;
  text-align: center;
}
.page-thumb { flex: 1; margin-top: 49px; }
.page-scroll .arrow.down { margin-top: 0; }
```
